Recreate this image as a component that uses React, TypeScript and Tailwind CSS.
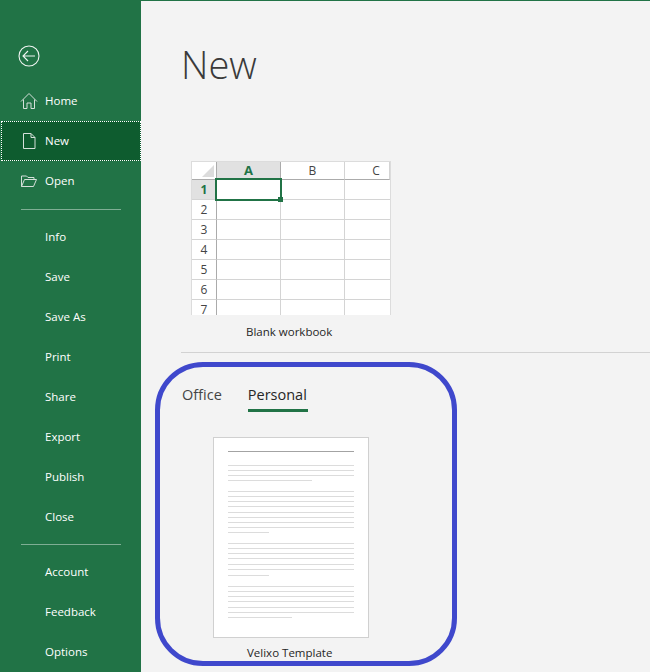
import React from "react";

const font = "font-['Open_Sans','Noto_Sans',sans-serif]";

function BackIcon() {
  return (
    <svg width="22" height="22" viewBox="0 0 22 22" fill="none" stroke="#f0f5f2" strokeWidth="1.1">
      <circle cx="11" cy="11" r="10" />
      <path d="M5 11H17M10 6L5 11L10 16" />
    </svg>
  );
}
function HomeIcon() {
  return (
    <svg width="18" height="18" viewBox="0 0 18 18" fill="none" stroke="#d5e0da" strokeWidth="1">
      <path d="M1 9.5L9 1.5L17 9.5M3.5 7.5V16.5H7V11H11V16.5H14.5V7.5" />
    </svg>
  );
}
function DocIcon() {
  return (
    <svg width="18" height="18" viewBox="0 0 18 18" fill="none" stroke="#d5e0da" strokeWidth="1">
      <path d="M3.5 1.5H11L15 5.5V16.5H3.5ZM11 1.5V5.5H15" />
    </svg>
  );
}
function FolderIcon() {
  return (
    <svg width="18" height="18" viewBox="0 0 18 18" fill="none" stroke="#d5e0da" strokeWidth="1">
      <path d="M1.5 14.5V4H6.5L8 5.5H14V7.5M1.5 14.5H13.5L16.5 7.5H4.5Z" />
    </svg>
  );
}

function Item({ label, icon, active }: { label: string; icon?: React.ReactNode; active?: boolean }) {
  return (
    <div
      className={
        "flex h-10 items-center text-[11.5px] text-white " +
        (active ? "ml-px border border-dotted border-white bg-[#0e5c2f] " : "")
      }
    >
      <div className={"flex w-[18px] shrink-0 justify-center mr-[7px] " + (active ? "ml-[18px]" : "ml-[20px]")}>
        {icon}
      </div>
      <span>{label}</span>
    </div>
  );
}

function Divider() {
  return <div className="ml-[21px] mt-2 mb-[7px] h-px w-[100px] bg-[#7fae94]" />;
}

function Sidebar() {
  return (
    <aside className="flex h-full w-[141px] shrink-0 flex-col overflow-hidden bg-[#217346] pt-[45px]">
      <div className="ml-[18px] mb-[14px] h-[22px]">
        <BackIcon />
      </div>
      <Item label="Home" icon={<HomeIcon />} />
      <Item label="New" icon={<DocIcon />} active />
      <Item label="Open" icon={<FolderIcon />} />
      <Divider />
      <Item label="Info" />
      <Item label="Save" />
      <Item label="Save As" />
      <Item label="Print" />
      <Item label="Share" />
      <Item label="Export" />
      <Item label="Publish" />
      <Item label="Close" />
      <Divider />
      <Item label="Account" />
      <Item label="Feedback" />
      <Item label="Options" />
    </aside>
  );
}

const cols = ["A", "B", "C"];
const rows = [1, 2, 3, 4, 5, 6, 7];

function Sheet() {
  return (
    <div className="relative h-[154px] w-[200px] overflow-hidden bg-white border-t border-r border-l border-[#dcdcdc] text-[12px] text-[#444]">
      <div className="grid grid-cols-[25px_64px_64px_45px]">
        <div className="flex h-[18px] items-end justify-end border-b border-r border-[#ababab] pr-[2px] pb-[2px]">
          <div className="h-0 w-0 border-b-[12px] border-l-[12px] border-b-[#dcdcdc] border-l-transparent" />
        </div>
        {cols.map((c, i) => (
          <div
            key={c}
            className={
              "flex h-[18px] items-center justify-center border-b border-r border-[#ababab] " +
              (i === 0 ? "bg-[#e1e1e1] font-bold text-[#217346] text-[13px]" : "border-r-[#d4d4d4]")
            }
          >
            <span className={i === 2 ? "pl-[18px]" : ""}>{c}</span>
          </div>
        ))}
      </div>
      {rows.map((r) => (
        <div key={r} className="grid h-5 grid-cols-[25px_64px_64px_45px]">
          <div
            className={
              "flex items-center justify-center border-b border-r border-[#ababab] border-b-[#d4d4d4] " +
              (r === 1 ? "bg-[#e1e1e1] font-bold text-[#217346]" : "")
            }
          >
            {r}
          </div>
          <div className="border-b border-r border-[#d4d4d4]" />
          <div className="border-b border-r border-[#d4d4d4]" />
          <div className="border-b border-[#d4d4d4]" />
        </div>
      ))}
      <div className="absolute left-[23px] top-[16px] h-[23px] w-[67px] border-2 border-[#217346]" />
      <div className="absolute left-[86px] top-[35px] h-[5px] w-[5px] bg-[#217346]" />
    </div>
  );
}

function DocThumb() {
  return (
    <div className="h-[201px] w-[156px] border border-[#d0d0d0] bg-white pl-[14px] pt-[13px]">
      <div className="h-px w-[126px] bg-[#a3a3a3]" />
      {[
        { top: 13, steps: [5, 5, 5], last: "w-[84px]" },
        { top: 10, steps: [5, 5, 5, 6, 5, 5, 5, 5], last: "w-[41px]" },
        { top: 10, steps: [5, 5, 5, 6, 5, 6], last: "w-[41px]" },
        { top: 10, steps: [5, 5, 5, 6, 5, 5], last: "w-[64px]" },
      ].map((p, i) => (
        <div key={i} style={{ marginTop: p.top }}>
          {p.steps.map((s, j) => (
            <div key={j} className="h-px w-[126px] bg-[#dcdcdc]" style={{ marginBottom: s - 1 }} />
          ))}
          <div className={"h-px bg-[#dcdcdc] " + p.last} />
        </div>
      ))}
    </div>
  );
}

export default function App() {
  return (
    <div className={"relative flex h-[672px] w-[650px] overflow-hidden bg-[#f3f3f3] " + font}>
      <Sidebar />
      <main className="min-w-0 flex-1 border-t border-[#217346] text-[#262626]">
        <h1 className="ml-[40px] mt-[37px] h-[52px] text-[38px] font-light leading-[52px] text-[#3a3a3a]">New</h1>
        <div className="ml-[50px] mt-[71px]">
          <Sheet />
        </div>
        <div className="ml-[105px] mt-[7px] h-5 text-[11.5px] leading-5 text-[#262626]">Blank workbook</div>
        <div className="ml-[40px] mt-[10px] h-px bg-[#d2d2d2]" />
        <div className="ml-[41px] mt-[32px] flex gap-[26px] text-[14.5px] leading-5">
          <div className="h-[27px] text-[#444]">Office</div>
          <div className="h-[27px] w-[60px] border-b-[3px] border-[#217346] text-[#262626]">Personal</div>
        </div>
        <div className="ml-[72px] mt-[25px]">
          <DocThumb />
        </div>
        <div className="ml-[106px] mt-[5px] text-[11.5px] leading-5 text-[#262626]">Velixo Template</div>
      </main>
      <div className="pointer-events-none absolute left-[155px] top-[362px] h-[304px] w-[302px] rounded-[48px] border-[5px] border-[#3f48cc]" />
    </div>
  );
}
